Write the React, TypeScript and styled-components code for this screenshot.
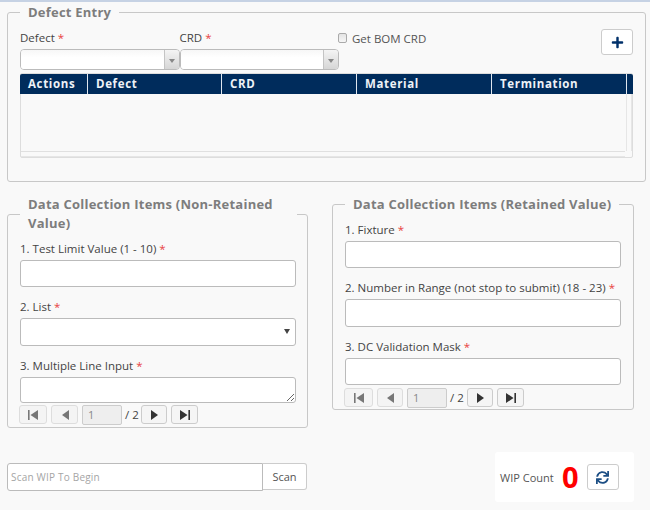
import React from 'react'
import styled, { createGlobalStyle } from 'styled-components'
import { FaPlus, FaSync } from 'react-icons/fa'

const GlobalStyle = createGlobalStyle`
    html, body {
        margin: 0;
        padding: 0;
        background: #f9f9f9;
    }
    body {
        font-family: "Open Sans", "Liberation Sans", sans-serif;
        font-size: 11.5px;
        color: #444;
    }
    * {
        box-sizing: border-box;
    }
`

const columns = [
    { title: 'Actions', width: 68 },
    { title: 'Defect', width: 134 },
    { title: 'CRD', width: 135 },
    { title: 'Material', width: 135 },
    { title: 'Termination', width: 135 },
]

function Label({ children }: { children: React.ReactNode }) {
    return (
        <FieldLabel>
            {children} <Star>*</Star>
        </FieldLabel>
    )
}

function Pager({ wide }: { wide?: boolean }) {
    return (
        <PagerRow>
            <PagerButton $width={wide ? 29 : 28} disabled>
                <PagerIcon viewBox="0 0 12 10"><path d="M1 0h1.6v10H1zM11 0v10L3.5 5z" /></PagerIcon>
            </PagerButton>
            <PagerButton $width={wide ? 26 : 27} disabled>
                <PagerIcon viewBox="0 0 12 10"><path d="M10 0v10L3 5z" /></PagerIcon>
            </PagerButton>
            <PageInput value="1" readOnly />
            <PageTotal $wide={wide}>/ 2</PageTotal>
            <PagerButton $width={26}>
                <PagerIcon viewBox="0 0 12 10"><path d="M3 0v10l7-5z" /></PagerIcon>
            </PagerButton>
            <PagerButton $width={27}>
                <PagerIcon viewBox="0 0 12 10"><path d="M1 0v10l7.5-5zM9.4 0H11v10H9.4z" /></PagerIcon>
            </PagerButton>
        </PagerRow>
    )
}

export default function App() {
    return (
        <Page>
            <GlobalStyle />
            <DefectSet>
                <Legend>Defect Entry</Legend>
                <DefectTop>
                    <ComboField>
                        <Label>Defect</Label>
                        <Combo>
                            <ComboInput />
                            <ComboArrow><Caret /></ComboArrow>
                        </Combo>
                    </ComboField>
                    <ComboField>
                        <Label>CRD</Label>
                        <Combo>
                            <ComboInput />
                            <ComboArrow><Caret /></ComboArrow>
                        </Combo>
                    </ComboField>
                    <BomCheck>
                        <CheckBox />
                        Get BOM CRD
                    </BomCheck>
                    <AddButton><FaPlus size={13} /></AddButton>
                </DefectTop>
                <Grid>
                    <GridHead>
                        {columns.map((c) => (
                            <GridCol key={c.title} style={{ width: c.width }}>{c.title}</GridCol>
                        ))}
                    </GridHead>
                    <GridBody>
                        <GridRows />
                        <VTrack />
                    </GridBody>
                    <HTrack />
                </Grid>
            </DefectSet>

            <Columns>
                <LeftSet>
                    <Legend>Data Collection Items (Non-Retained Value)</Legend>
                    <Label>1. Test Limit Value (1 - 10)</Label>
                    <TextInput />
                    <Label>2. List</Label>
                    <SelectWrap>
                        <ListSelect />
                        <SelectArrow />
                    </SelectWrap>
                    <Label>3. Multiple Line Input</Label>
                    <TextArea />
                    <Pager />
                </LeftSet>
                <RightSet>
                    <Legend>Data Collection Items (Retained Value)</Legend>
                    <Label>1. Fixture</Label>
                    <TextInput />
                    <Label>2. Number in Range (not stop to submit) (18 - 23)</Label>
                    <TextInput $height={28} />
                    <Label>3. DC Validation Mask</Label>
                    <TextInput $last />
                    <Pager wide />
                </RightSet>
            </Columns>

            <Footer>
                <ScanGroup>
                    <ScanInput placeholder="Scan WIP To Begin" />
                    <ScanButton>Scan</ScanButton>
                </ScanGroup>
                <WipCard>
                    <WipLabel>WIP Count</WipLabel>
                    <WipValue>0</WipValue>
                    <RefreshButton><FaSync size={13} /></RefreshButton>
                </WipCard>
            </Footer>
        </Page>
    )
}

const Page = styled.div`
    width: 650px;
    height: 510px;
    overflow: hidden;
    padding: 2px 5px 0 7px;
    background: linear-gradient(#c6d2e4 2px, #f9f9f9 2px);
`

const FieldSet = styled.fieldset`
    margin: 0;
    min-width: 0;
    border: 1px solid #c8c8c8;
    border-radius: 3px;
`

const Legend = styled.legend`
    padding: 0 8px;
    font-size: 13px;
    font-weight: 700;
    line-height: 19px;
    letter-spacing: 0.23px;
    color: #7d7d7d;
`

const DefectSet = styled(FieldSet)`
    width: 639px;
    height: 179px;
    margin-top: 1px;
    padding: 7px 12px 0;
`

const DefectTop = styled.div`
    display: flex;
    height: 44px;
`

const ComboField = styled.div`
    width: 159.5px;
`

const FieldLabel = styled.div`
    height: 17px;
    font-size: 11.5px;
    line-height: 17px;
    color: #444;
`

const Star = styled.span`
    color: #e8413f;
`

const Combo = styled.div`
    display: flex;
    height: 21px;
    margin-top: 3px;
    border: 1px solid #bbb;
    border-radius: 4px;
    overflow: hidden;
`

const ComboInput = styled.div`
    flex: 1;
    background: linear-gradient(#f7f7f7, #fff 40%);
`

const ComboArrow = styled.div`
    display: grid;
    width: 15px;
    place-items: center;
    border-left: 1px solid #c4c4c4;
    background: linear-gradient(#f4f4f4, #d6d6d6);
`

const Caret = styled.span`
    width: 0;
    height: 0;
    margin-top: 2px;
    border: 3px solid transparent;
    border-top: 4px solid #888;
    border-bottom: 0;
`

const BomCheck = styled.label`
    display: flex;
    align-items: flex-start;
    gap: 5px;
    height: 18px;
    margin: 1px 0 0 -1px;
    line-height: 17px;
    color: #555;
`

const CheckBox = styled.span`
    width: 9px;
    height: 10px;
    margin-top: 3px;
    border: 1px solid #aaa;
    border-radius: 2px;
    background: linear-gradient(#e4e4e4, #f6f6f6);
`

const AddButton = styled.button`
    display: grid;
    width: 32px;
    height: 26px;
    margin: 0 0 0 auto;
    padding: 0;
    place-items: center;
    background: #fff;
    border: 1px solid #ccc;
    border-radius: 3px;
    color: #00306a;
`

const Grid = styled.div`
    width: 613px;
    height: 85px;
    border: 1px solid #ddd;
    border-radius: 2px;
`

const GridHead = styled.div`
    display: flex;
    height: 20px;
    margin: 0 -1px;
    padding-right: 5px;
    background: #002c5c;
    border-radius: 2px 2px 0 0;
`

const GridCol = styled.div`
    flex: none;
    padding-left: 8px;
    border-right: 1px solid #dfe6ef;
    font-size: 11.5px;
    font-weight: 700;
    line-height: 20px;
    letter-spacing: 0.65px;
    color: #eef2f7;
`

const GridBody = styled.div`
    display: flex;
    height: 57px;
`

const GridRows = styled.div`
    flex: 1;
`

const VTrack = styled.div`
    width: 6px;
    border-left: 1px solid #e6e6e6;
    border-right: 1px solid #e6e6e6;
`

const HTrack = styled.div`
    height: 6px;
    margin-right: 7px;
    border-top: 1px solid #e0e0e0;
    border-bottom: 1px solid #e6e6e6;
`

const Columns = styled.div`
    display: flex;
    align-items: flex-start;
    margin-top: 13px;
`

const LeftSet = styled(FieldSet)`
    width: 301px;
    height: 233px;
    padding: 7px 10px 0 12px;
`

const RightSet = styled(FieldSet)`
    width: 302px;
    height: 215px;
    margin-left: 24px;
    padding: 7px 12px 0;
`

const TextInput = styled.input<{ $height?: number; $last?: boolean }>`
    display: block;
    width: 276px;
    height: ${(p) => p.$height || 27}px;
    margin: 3px 0 ${(p) => (p.$last ? 2 : 11)}px;
    background: #fff;
    border: 1px solid #bbb;
    border-radius: 3px;
`

const SelectWrap = styled.div`
    position: relative;
    width: 276px;
    margin: 3px 0 11px;
`

const ListSelect = styled.select`
    display: block;
    width: 100%;
    height: 28px;
    appearance: none;
    background: #fff;
    border: 1px solid #bbb;
    border-radius: 3px;
`

const SelectArrow = styled.span`
    position: absolute;
    top: 11px;
    right: 6px;
    width: 0;
    height: 0;
    border: 3px solid transparent;
    border-top: 5px solid #444;
    border-bottom: 0;
`

const TextArea = styled.textarea`
    display: block;
    width: 276px;
    height: 26px;
    margin: 3px 0 1px;
    background: #fff;
    border: 1px solid #bbb;
    border-radius: 3px;
`

const PagerRow = styled.div`
    display: flex;
    align-items: center;
    margin-left: -1px;
    height: 21px;
`

const PagerButton = styled.button<{ $width: number }>`
    display: grid;
    width: ${(p) => p.$width}px;
    height: 19px;
    margin-right: 4px;
    padding: 0;
    place-items: center;
    background: #f5f5f5;
    border: 1px solid #ccc;
    border-radius: 3px;
    color: #333;

    &:disabled {
        color: #777;
        background: #f4f4f4;
        border-color: #ddd;
    }
`

const PagerIcon = styled.svg`
    width: 12px;
    height: 10px;
    fill: currentColor;
`

const PageInput = styled.input`
    width: 40px;
    height: 20px;
    padding: 0 5px;
    background: #eee;
    border: 1px solid #ccc;
    border-radius: 2px;
    font-family: inherit;
    font-size: 11px;
    color: #888;
`

const PageTotal = styled.span<{ $wide?: boolean }>`
    width: ${(p) => (p.$wide ? 20 : 19)}px;
    padding-left: 3px;
    font-size: 11.5px;
    color: #444;
`

const Footer = styled.div`
    display: flex;
    align-items: center;
    justify-content: space-between;
    width: 627px;
    margin-top: 24px;
`

const ScanGroup = styled.div`
    display: flex;
    align-items: flex-start;
`

const ScanInput = styled.input`
    width: 256px;
    height: 28px;
    padding: 0 3px;
    background: #fff;
    border: 1px solid #bbb;
    border-radius: 3px 0 0 3px;
    font-family: inherit;
    font-size: 10px;
    letter-spacing: 0.2px;

    &::placeholder {
        color: #a5a5a5;
    }
`

const ScanButton = styled.button`
    width: 44px;
    height: 27px;
    padding: 0;
    background: #fff;
    border: 1px solid #ccc;
    border-left: 0;
    border-radius: 0 3px 3px 0;
    font-family: inherit;
    font-size: 11px;
    color: #555;
`

const WipCard = styled.div`
    display: flex;
    align-items: center;
    width: 139px;
    height: 50px;
    padding-left: 5px;
    background: #fff;
    border-radius: 3px;
`

const WipLabel = styled.span`
    font-size: 11px;
    color: #555;
`

const WipValue = styled.span`
    width: 33px;
    text-align: center;
    font-size: 29px;
    font-weight: 700;
    line-height: 34px;
    color: #f00;
`

const RefreshButton = styled.button`
    display: grid;
    width: 32px;
    height: 26px;
    padding: 0;
    place-items: center;
    background: #fff;
    border: 1px solid #ccc;
    border-radius: 3px;
    color: #1d4f85;
`
